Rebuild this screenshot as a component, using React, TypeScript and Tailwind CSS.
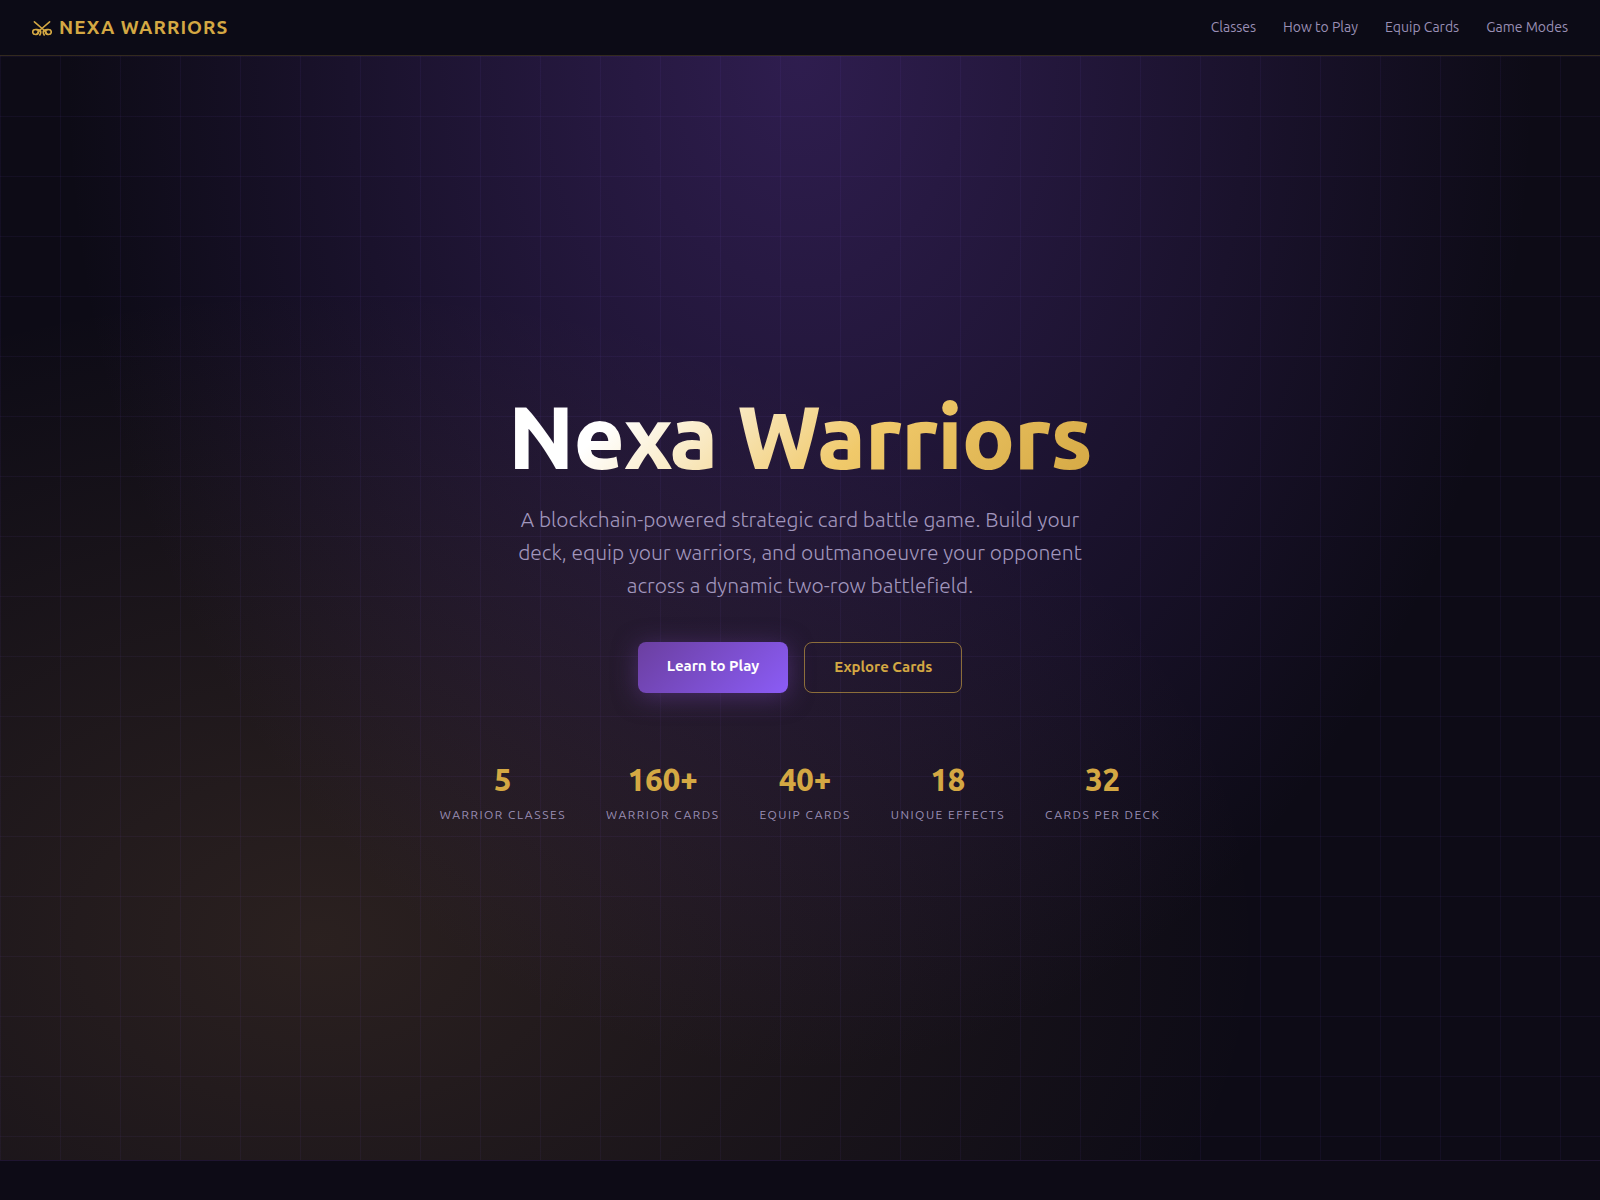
const navLinks = [
  { label: 'Classes', href: '#classes' },
  { label: 'How to Play', href: '#how-to-play' },
  { label: 'Equip Cards', href: '#equip-cards' },
  { label: 'Game Modes', href: '#game-modes' },
];

const stats = [
  { value: '5', label: 'Warrior Classes' },
  { value: '160+', label: 'Warrior Cards' },
  { value: '40+', label: 'Equip Cards' },
  { value: '18', label: 'Unique Effects' },
  { value: '32', label: 'Cards per Deck' },
];

function SwordsIcon() {
  return (
    <svg
      viewBox="0 0 20 16"
      className="h-4 w-5"
      fill="none"
      stroke="currentColor"
      strokeWidth="1.6"
      strokeLinecap="round"
      aria-hidden="true"
    >
      <path d="M2.4 1.8 L13 11 M17.6 1.8 L7 11" />
      <ellipse cx="3.6" cy="12" rx="2.9" ry="2.5" />
      <ellipse cx="16.4" cy="12" rx="2.9" ry="2.5" />
      <path d="M4.6 9.5 C8.6 9.3 9.8 11.8 7.8 15 M4.8 14.4 L7 11" />
      <path d="M15.4 9.5 C11.4 9.3 10.2 11.8 12.2 15 M15.2 14.4 L13 11" />
    </svg>
  );
}

function Header() {
  return (
    <header className="flex h-14 items-center justify-between border-b border-[#d4a843]/20 bg-[#0c0b16] px-8">
      <a
        href="#top"
        className="flex items-center gap-[7px] text-[19px] font-bold uppercase tracking-[1px] text-[#d4a843]"
      >
        <SwordsIcon />
        Nexa Warriors
      </a>
      <nav className="flex gap-[27px]">
        {navLinks.map((link) => (
          <a key={link.href} href={link.href} className="text-[14px] text-[#9a8fb5] hover:text-[#d4a843]">
            {link.label}
          </a>
        ))}
      </nav>
    </header>
  );
}

function Hero() {
  return (
    <section
      id="top"
      className="relative flex min-h-[92vh] flex-col items-center justify-center bg-[radial-gradient(ellipse_at_50%_0%,rgba(104,60,176,0.37)_0%,transparent_65%),radial-gradient(ellipse_at_20%_80%,rgba(212,155,85,0.15)_0%,transparent_52%)] px-8 text-center"
    >
      <div className="absolute inset-0 bg-[linear-gradient(rgba(139,92,246,0.06)_1px,transparent_1px),linear-gradient(90deg,rgba(139,92,246,0.06)_1px,transparent_1px)] bg-[size:60px_60px]" />
      <div className="relative flex flex-col items-center">
        <h1 className="mb-[18px] bg-[linear-gradient(135deg,#ffffff_20%,#f0c96a_60%,#d4a843_100%)] bg-clip-text text-[88px] font-black leading-[96px] tracking-[-1px] text-transparent">
          Nexa Warriors
        </h1>
        <p className="mb-10 max-w-[600px] text-[21px] font-light leading-[33px] text-[#a196bd]">
          A blockchain-powered strategic card battle game. Build your deck, equip your warriors, and outmanoeuvre your
          opponent across a dynamic two-row battlefield.
        </p>
        <div className="mb-16 flex flex-wrap justify-center gap-4">
          <a
            href="#how-to-play"
            className="rounded-lg bg-[linear-gradient(135deg,#6b3fa0,#8b5cf6)] px-[29px] pt-3 pb-[15px] text-[15px] font-bold leading-6 text-white shadow-[0_4px_24px_rgba(107,63,160,0.5)]"
          >
            Learn to Play
          </a>
          <a
            href="#equip-cards"
            className="rounded-lg border border-[#d4a843]/60 px-[29px] pt-3 pb-[13px] text-[15px] font-bold leading-6 text-[#d4a843]"
          >
            Explore Cards
          </a>
        </div>
        <dl className="flex flex-wrap justify-center gap-10">
          {stats.map((stat) => (
            <div key={stat.label} className="flex flex-col-reverse">
              <dt className="text-[12px] uppercase leading-6 tracking-[1.5px] text-[#9a8fb5]">{stat.label}</dt>
              <dd className="text-[31px] font-extrabold leading-[46px] text-[#d4a843]">{stat.value}</dd>
            </div>
          ))}
        </dl>
      </div>
    </section>
  );
}

export default function App() {
  return (
    <div className="min-h-screen bg-[#0d0b16] font-[Ubuntu,'Open_Sans',sans-serif]">
      <Header />
      <main>
        <Hero />
        <div className="border-t border-[#6b3fa0]/20" />
      </main>
    </div>
  );
}
